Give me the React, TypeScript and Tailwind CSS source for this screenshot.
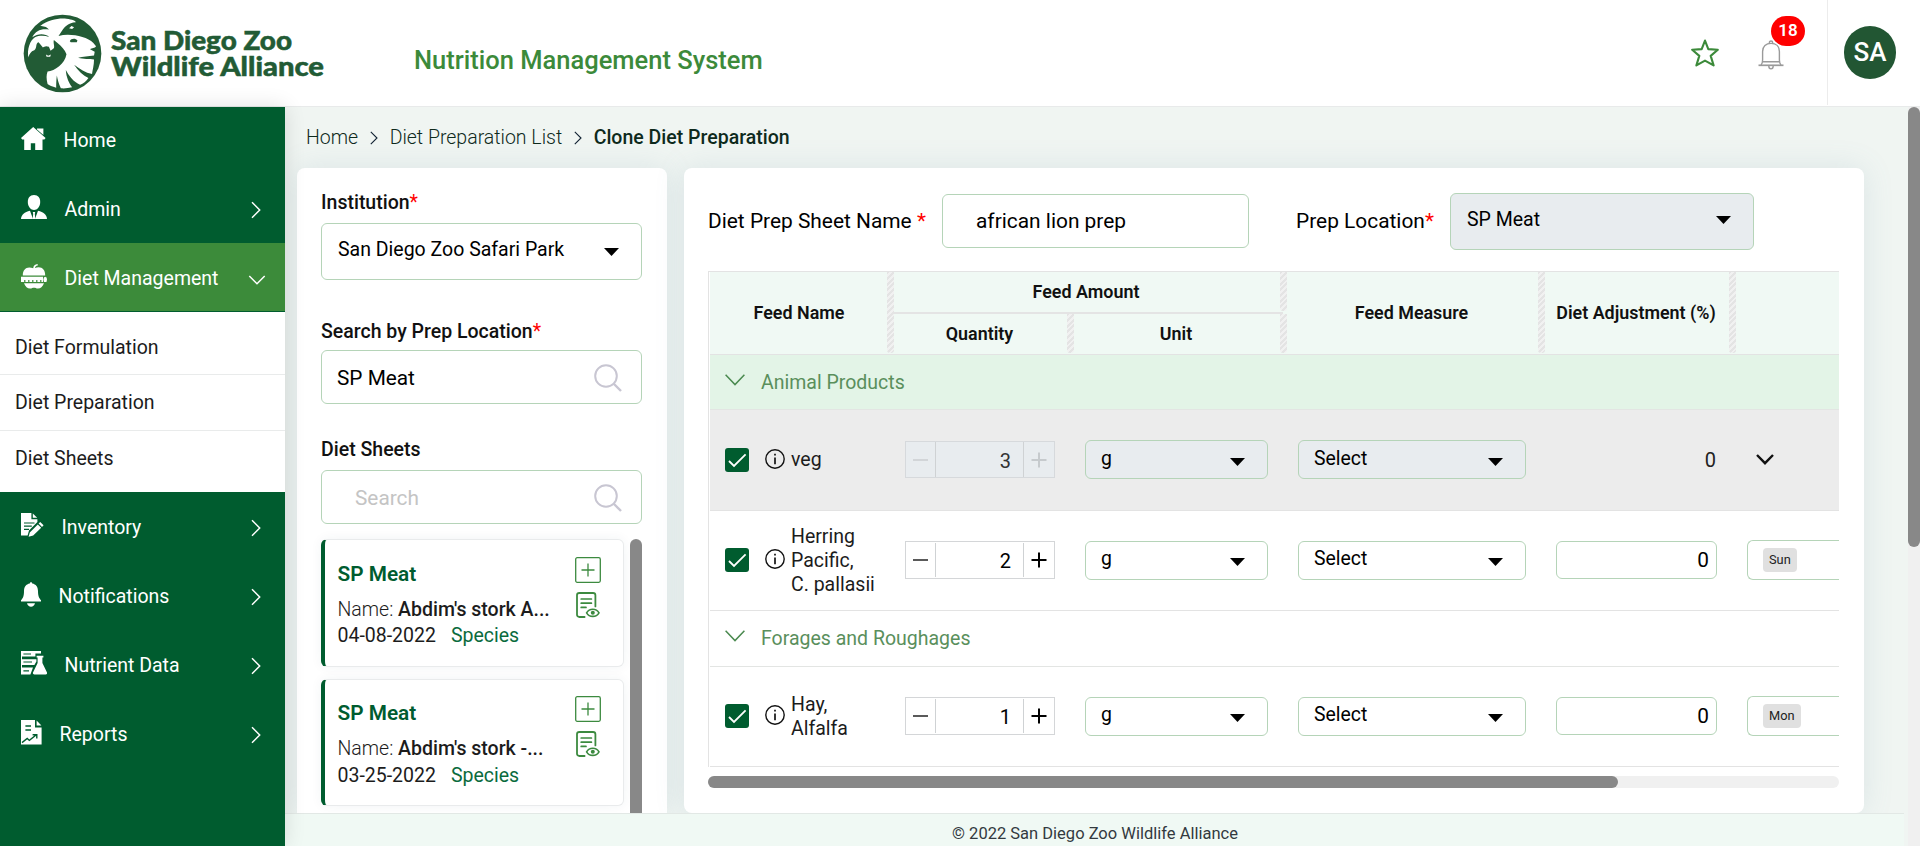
import React from "react";

/* ---------- icons ---------- */

function ZooEmblem() {
  return (
    <svg viewBox="25 25 236 238" className="h-[79px] w-[79px] shrink-0">
      <circle cx="143" cy="144" r="117" fill="#225b35" />
      <path
        fill="#fff"
        d="M76 61 C100 42 130 37 155 39 C172 41 184 46 183 50 C160 52 152 62 144 72 L131 91 C165 82 215 92 236 112 L244 122 C240 129 232 126 226 131 L240 139 L238 150 C220 153 205 153 190 157 C205 162 225 160 238 162 C238 180 233 195 232 206 C212 202 195 191 178 178 C190 197 205 210 221 218 C215 228 205 235 196 238 C176 230 163 212 153 194 C154 215 163 235 172 246 C160 249 148 250 138 249 C132 235 128 222 126 210 C124 225 124 238 124 247 C112 244 103 240 98 236 C94 220 94 208 98 198 C120 196 150 175 155 146 C150 132 140 122 128 112 L117 103 C114 114 122 124 115 130 L107 136 L102 124 C92 120 88 124 84 126 L71 110 C60 114 68 126 58 134 C48 136 42 148 40 156 C36 130 45 105 60 95 C75 88 90 90 103 94 C92 84 70 82 52 95 C62 75 80 68 102 72 C95 62 85 62 76 61Z"
      />
      <path fill="#225b35" d="M165 107 C168 99 182 97 188 105 L186 110 H168Z" />
      <path fill="#fff" d="M163 68 L170 61 L178 65 L172 70Z" />
      <path fill="#fff" d="M93 147 L100 151 L108 147 L106 154 H95Z" />
    </svg>
  );
}

function HomeIcon() {
  return (
    <svg viewBox="0 0 25 24" className="h-6 w-[25px]" fill="#fff">
      <path d="M12.2 0 L0 11 L1.2 12.6 H3.2 V23 H9.8 V16.2 H14.2 V23 H21.5 V12.6 H23.4 L24.6 11 Z" />
      <path d="M16 1.6 H22.4 V8 L16 2.6Z" />
    </svg>
  );
}

function AdminIcon() {
  return (
    <svg viewBox="0 0 26 24" className="h-6 w-[26px]" fill="#fff">
      <path d="M13 0 C17.2 0 19.2 3 19.2 7 C19.2 11.5 16.2 15 13 15 C9.8 15 6.8 11.5 6.8 7 C6.8 3 8.8 0 13 0Z" />
      <path d="M9 15.8 L12 24 H0 C.4 19.5 3.5 17.2 9 15.8Z" />
      <path d="M17 15.8 L14 24 H26 C25.6 19.5 22.5 17.2 17 15.8Z" />
      <path d="M11.8 17 H14.2 L13.8 19 L14.4 24 H11.6 L12.2 19Z" />
    </svg>
  );
}

function DietIcon() {
  return (
    <svg viewBox="0 0 26 25" className="h-[25px] w-[26px]" fill="#fff">
      <path d="M12.2 4.2 C12.4 1.8 14 .3 16.6 0 L16.8 1.4 C14.8 1.7 14 2.6 14 4 C20 1.8 24.3 5 24.2 11.5 H1.8 C1.7 5 6 1.8 12.2 4.2Z" />
      <path d="M0 12.8 H22 V18 H20.4 V16 H19.2 V18 H16.4 V16 H15.2 V18 H12.4 V16 H11.2 V18 H8.4 V16 H7.2 V18 H4.4 V16 H3.2 V18 H0Z" />
      <ellipse cx="24.2" cy="15.4" rx="1.8" ry="2.7" />
      <path d="M3 19.2 H23 C21.5 22.5 19.5 24.8 16.6 24.6 C15.2 24.5 14.5 23.8 13 23.8 C11.5 23.8 10.8 24.5 9.4 24.6 C6.5 24.8 4.5 22.5 3 19.2Z" />
    </svg>
  );
}

function InventoryIcon() {
  return (
    <svg viewBox="0 0 23 24" className="h-6 w-[23px]">
      <path fill="#fff" d="M0 0 H10.4 V6.2 H16.4 V9 L8 17.4 L6.6 22.6 H0Z" />
      <path fill="#fff" d="M11.8 .4 L16.2 4.8 H11.8Z" />
      <path stroke="#005c2f" strokeWidth="1.2" d="M3 10 H13.5 M3 13.2 H10.8 M3 16.4 H8" />
      <path fill="#fff" d="M19.2 9 L22.6 12.3 L21 14 L17.6 10.6Z M16.8 11.4 L20.2 14.8 L12.2 22.4 L7.6 23.8 L8.8 19.4Z" />
    </svg>
  );
}

function NotificationIcon() {
  return (
    <svg viewBox="0 0 20 25" className="h-[25px] w-5" fill="#fff">
      <path d="M8.8 1.4 C8.8 -.2 11.2 -.2 11.2 1.4 C15 2 17 5 17 9 C17 14 18 16 20 18.3 V19.4 H0 V18.3 C2 16 3 14 3 9 C3 5 5 2 8.8 1.4Z" />
      <path d="M6 21.3 H14 C13.4 23.5 12 24.8 10 24.8 C8 24.8 6.6 23.5 6 21.3Z" />
    </svg>
  );
}

function NutrientIcon() {
  return (
    <svg viewBox="0 0 26 24" className="h-6 w-[26px]">
      <path fill="#fff" fillRule="evenodd" d="M0 0 H20 V2.6 H14.4 V5.6 H0Z M2.4 2.6 V3.4 H10 V2.6Z" />
      <path fill="#fff" fillRule="evenodd" d="M0 8.2 H15.4 V10.4 L13.4 14 H0Z M2.4 10.6 V11.6 H11 V10.6Z" />
      <path fill="#fff" fillRule="evenodd" d="M0 16.4 H12 L9.4 23.4 H0Z M2.4 19.2 V20.4 H8 V19.2Z" />
      <path stroke="#fff" strokeWidth="1" d="M.5 0 V23" />
      <path fill="#fff" d="M15.6 4.8 H22.4 V6.4 H21.4 V12 L26 21.4 C26.4 22.6 25.8 23.6 24.6 23.6 H13.4 C12.2 23.6 11.6 22.6 12 21.4 L16.6 12 V6.4 H15.6Z" />
    </svg>
  );
}

function ReportsIcon() {
  return (
    <svg viewBox="0 0 21 25" className="h-[25px] w-[21px]">
      <path fill="#fff" d="M0 0 H14 V7.4 H20.6 V24.6 H0Z" />
      <path fill="#fff" d="M15.6 .6 L20.4 5.6 H15.6Z" />
      <path fill="none" stroke="#005c2f" strokeWidth="1.4" d="M4.4 6 H10 M4.4 10 H10 M1 22.6 L6.2 18.4 L8.4 20.4 L15.4 14.8 M11.6 14.8 H15.8 V18.6" />
    </svg>
  );
}

function Chevron({ down = false }: { down?: boolean }) {
  return down ? (
    <svg viewBox="0 0 18 10" className="mt-1 mr-[19px] ml-auto h-[10px] w-[18px]" fill="none" stroke="#fff" strokeWidth="1.5">
      <path d="M1.3 1 L9 8.7 L16.7 1" />
    </svg>
  ) : (
    <svg viewBox="0 0 10 18" className="mt-[3px] mr-6 ml-auto h-[18px] w-[10px]" fill="none" stroke="#fff" strokeWidth="1.5">
      <path d="M1 1.3 L8.7 9 L1 16.7" />
    </svg>
  );
}

function BreadcrumbArrow() {
  return (
    <svg viewBox="0 0 8 14" className="mr-3 ml-[11.5px] h-[14px] w-2" fill="none" stroke="#123" strokeWidth="1.1">
      <path d="M.8 .8 L7 7 L.8 13.2" />
    </svg>
  );
}

function Caret({ className = "" }: { className?: string }) {
  return (
    <svg viewBox="0 0 15 8" className={"h-2 w-[15px] shrink-0 " + className}>
      <path d="M0 0 H15 L7.5 8Z" fill="#000" />
    </svg>
  );
}

function SearchIcon() {
  return (
    <svg viewBox="0 0 28 28" className="mt-[2px] h-7 w-7" fill="none" stroke="#c8c6d2" strokeWidth="2">
      <circle cx="12" cy="12" r="10.8" />
      <path d="M19.5 19.5 L27 27" strokeWidth="2.4" />
    </svg>
  );
}

function PlusBox() {
  return (
    <svg viewBox="0 0 26 26" className="h-[26px] w-[26px]" fill="none" stroke="#3c8a3f" strokeWidth="1.3">
      <rect x=".7" y=".7" width="24.6" height="24.6" rx="1.5" />
      <path d="M13 6.5 V19.5 M6.5 13 H19.5" />
    </svg>
  );
}

function SheetView() {
  return (
    <svg viewBox="0 0 24 26" className="h-[26px] w-6" fill="none" stroke="#3c8a3f" strokeWidth="1.8" strokeLinecap="round">
      <path d="M8.6 25 H3.4 C2 25 1 24.2 1 22.8 V3.2 C1 1.8 2 1 3.4 1 H17 C18.4 1 19.4 1.8 19.4 3.2 V14.4" />
      <path d="M5.2 7 H15.4 M5.2 11.2 H15.4 M5.2 15.4 H10" strokeWidth="1.7" />
      <path d="M10.6 20.8 C13.4 16 20.2 16 23 20.8 C20.2 25.6 13.4 25.6 10.6 20.8Z" strokeWidth="1.6" />
      <circle cx="16.8" cy="20.8" r="2" fill="#3c8a3f" stroke="none" />
    </svg>
  );
}

function InfoIcon() {
  return (
    <svg viewBox="0 0 20 20" className="h-5 w-5 shrink-0" fill="none" stroke="#111" strokeWidth="1.4">
      <circle cx="10" cy="10" r="9.2" />
      <path d="M10 8.6 V15.2" strokeWidth="1.7" />
      <path d="M10 4.8 V6.6" strokeWidth="1.7" />
    </svg>
  );
}

function Checkbox() {
  return (
    <span className="flex h-6 w-6 shrink-0 items-center justify-center rounded-[3px] bg-[#005c2f]">
      <svg viewBox="0 0 24 24" className="h-6 w-6" fill="none" stroke="#fff" strokeWidth="1.8">
        <path d="M4 13 L9 18 L20.6 6.4" />
      </svg>
    </span>
  );
}

/* ---------- sidebar ---------- */

function NavItem({
  icon,
  label,
  className = "h-[69px]",
  arrow = "right",
}: {
  icon: React.ReactNode;
  label: string;
  className?: string;
  arrow?: "right" | "down" | "none";
}) {
  return (
    <a className={"flex shrink-0 items-center gap-[17.5px] pl-[21px] text-[19.5px] leading-6 text-white " + className}>
      <span className="mb-[3px]">{icon}</span>
      <span className="pt-[2px]">{label}</span>
      {arrow !== "none" && <Chevron down={arrow === "down"} />}
    </a>
  );
}

function Sidebar() {
  return (
    <nav className="z-10 flex w-[285px] shrink-0 flex-col bg-[#005c2f] shadow-[0_0_20px_rgba(0,0,0,0.12)]">
      <NavItem icon={<HomeIcon />} label="Home" className="h-[67px] pb-px" arrow="none" />
      <NavItem icon={<AdminIcon />} label="Admin" />
      <NavItem icon={<DietIcon />} label="Diet Management" arrow="down" className="h-[69px] border-b border-[#005c2f] bg-[#3c8b3a] pt-px" />
      <div className="flex h-[180px] shrink-0 flex-col bg-white text-[19.5px] leading-6 text-[#1c1c1c]">
        <a className="flex h-[63px] items-center border-b border-[#e9ebeb] pt-[9px] pl-[15px]">Diet Formulation</a>
        <a className="flex h-14 items-center border-b border-[#e9ebeb] pl-[15px]">Diet Preparation</a>
        <a className="flex h-14 items-center pl-[15px]">Diet Sheets</a>
      </div>
      <NavItem icon={<InventoryIcon />} label="Inventory" />
      <NavItem icon={<NotificationIcon />} label="Notifications" />
      <NavItem icon={<NutrientIcon />} label="Nutrient Data" />
      <NavItem icon={<ReportsIcon />} label="Reports" />
    </nav>
  );
}

/* ---------- header ---------- */

function Header() {
  return (
    <header className="flex h-[107px] shrink-0 border-b border-[#e8eaea] bg-white">
      <div className="flex w-[414px] pt-[14px] pl-[23px]">
        <ZooEmblem />
        <svg viewBox="0 0 220 79" className="ml-[7px] h-[79px] w-[220px]" fill="#225b35" fontFamily="Lato, sans-serif" fontWeight="900">
          <text x="2" y="35.5" fontSize="26.5" textLength="181" lengthAdjust="spacingAndGlyphs" stroke="#225b35" strokeWidth=".5">San Diego Zoo</text>
          <text x="2" y="61.5" fontSize="26.5" textLength="213" lengthAdjust="spacingAndGlyphs" stroke="#225b35" strokeWidth=".5">Wildlife Alliance</text>
        </svg>
      </div>
      <h1 className="pt-[44px] text-[25.5px] leading-8 font-medium text-[#3c8a3a]">Nutrition Management System</h1>
      <div className="mr-[43px] ml-auto flex">
        <svg viewBox="0 0 28 28" className="mt-[39px] h-7 w-7" fill="none" stroke="#3c8a3a" strokeWidth="2.1" strokeLinejoin="round">
          <path d="M14 1.6 L17.3 10.1 L26.8 10.8 L19.7 16.9 L22.6 26.4 L14 21.6 L5.4 26.4 L8.3 16.9 L1.2 10.8 L10.7 10.1Z" />
        </svg>
        <div className="relative mt-10 ml-[39px] h-[30px] w-[26px]">
          <svg viewBox="0 0 26 30" className="h-[30px] w-[26px]" fill="none" stroke="#9a9a9a" strokeWidth="1.4">
            <path d="M.5 25.3 H25.5" strokeWidth="1.7" />
            <path d="M3 25 C4.2 23.6 4.6 22 4.6 20 V11.5 C4.6 6.4 8 3.4 13 3.4 C18 3.4 21.4 6.4 21.4 11.5 V20 C21.4 22 21.8 23.6 23 25 M4.6 21.8 H21.4" />
            <path d="M11.4 3.4 V2.2 C11.4 .6 14.6 .6 14.6 2.2 V3.4 M10.8 26 C10.8 29.8 15.2 29.8 15.2 26" />
          </svg>
          <span className="absolute -top-6 left-[13px] flex h-[30px] w-[34px] items-center justify-center rounded-[15px] bg-[#ff0000] text-[17px] font-semibold text-white">18</span>
        </div>
      </div>
      <div className="mb-px flex w-[93px] border-l border-[#ececec] pt-[26px] pl-4">
        <span className="flex h-[53px] w-[52px] items-center justify-center rounded-full bg-[#225633] text-[26px] font-medium text-white">SA</span>
      </div>
    </header>
  );
}

/* ---------- left panel ---------- */

function SheetCard({ name, date, small = false }: { name: string; date: string; small?: boolean }) {
  return (
    <article
      className={
        "flex w-[303px] shrink-0 rounded-[6px] border border-l-4 border-[#e9ebec] border-l-[#005c2f] bg-white pl-[12.5px] shadow-[0_0_12px_rgba(30,60,80,0.06)] " +
        (small ? "h-[127px]" : "h-[128px]")
      }
    >
      <div className={"w-[237px] text-[19.5px] leading-[26px] text-[#1c1c1c] " + (small ? "pt-5" : "pt-[21px]")}>
        <h3 className="mb-[10px] text-[20.8px] font-semibold text-[#005c2f]">SP Meat</h3>
        <p className="whitespace-nowrap"><span className="font-light">Name: </span><span className="text-[19.5px] font-medium">{name}</span></p>
        <p className={small ? "pt-px" : ""}>{date}<span className="ml-[15px] text-[#0a6b3d]">Species</span></p>
      </div>
      <div className={"flex flex-col items-center gap-[9px] " + (small ? "pt-4" : "pt-[17px]")}>
        <PlusBox />
        <SheetView />
      </div>
    </article>
  );
}

function LeftPanel() {
  const box = "flex rounded-[6px] border border-[#b5d4b8] bg-white text-black";
  return (
    <aside className="flex w-[370px] shrink-0 flex-col overflow-hidden pr-[25px] pl-6 text-[19.5px]">
      <label className="mt-[21px] leading-7 font-medium text-[#111]">Institution<span className="font-normal text-[#ff0000]">*</span></label>
      <div className={box + " mt-[6px] h-[57px] shrink-0 items-center justify-between pr-[22px] pl-4"}>
        <span className="mb-[3px]">San Diego Zoo Safari Park</span>
        <Caret />
      </div>
      <label className="mt-[38px] leading-7 font-medium text-[#111]">Search by Prep Location<span className="font-normal text-[#ff0000]">*</span></label>
      <div className={box + " mt-1 h-[54px] shrink-0 items-center justify-between pr-[19px] pl-[15px] text-[20.8px]"}>
        <span className="pt-[4px]">SP Meat</span>
        <SearchIcon />
      </div>
      <label className="mt-8 leading-7 font-medium text-[#111]">Diet Sheets</label>
      <div className={box + " mt-[6px] h-[54px] shrink-0 items-center justify-between pr-[19px] pl-[33px] text-[20.8px]"}>
        <span className="pt-[4px] text-[#c4c4c4]">Search</span>
        <SearchIcon />
      </div>
      <div className="mt-[15px] flex h-[274px] shrink-0 justify-between">
        <div className="flex flex-col gap-3">
          <SheetCard name="Abdim's stork A..." date="04-08-2022" />
          <SheetCard name="Abdim's stork -..." date="03-25-2022" small />
        </div>
        <div className="w-3 rounded-t-[6px] bg-[#888]" />
      </div>
    </aside>
  );
}

/* ---------- feed table ---------- */

const GRID = "grid grid-cols-[184px_180px_213px_258px_191px_1fr]";
const STRIPES = "w-[7px] shrink-0 rounded-b-[3px] bg-[repeating-linear-gradient(135deg,#e4e4e4_0px,#e4e4e4_2px,#f1f1f1_2px,#f1f1f1_4px)]";

function HeadCell({ label, className = "" }: { label: string; className?: string }) {
  return (
    <div className={"flex h-full pb-px " + className}>
      <span className="flex flex-1 items-center justify-center pt-[2px] pr-[2px] whitespace-nowrap">{label}</span>
      <span className={STRIPES} />
    </div>
  );
}

function TableHead() {
  return (
    <div className="grid h-[83px] shrink-0 grid-cols-[184px_393px_258px_191px_1fr] border-b border-[#e3e3e3] bg-[#f0f9f4] text-[17.9px] font-semibold text-[#111]">
      <HeadCell label="Feed Name" className="pl-[3px]" />
      <div className="flex flex-col">
        <div className="h-10"><HeadCell label="Feed Amount" /></div>
        <div className="mr-1 h-[2px] bg-[#e4e4e4]" />
        <div className="flex h-10">
          <HeadCell label="Quantity" className="w-[180px]" />
          <HeadCell label="Unit" className="flex-1" />
        </div>
      </div>
      <HeadCell label="Feed Measure" />
      <HeadCell label="Diet Adjustment (%)" />
    </div>
  );
}

function GroupRow({ label, className }: { label: string; className: string }) {
  return (
    <div className={"flex shrink-0 items-center border-b border-[#e3e5e3] pl-[15px] text-[19.5px] text-[#5a8f5c] " + className}>
      <svg viewBox="0 0 20 12" className="mr-4 mb-1 h-3 w-5" fill="none" stroke="#4b8a50" strokeWidth="1.5">
        <path d="M.6 .8 L10 10.6 L19.4 .8" />
      </svg>
      <span className="pt-[2px]">{label}</span>
    </div>
  );
}

function Stepper({ value, disabled }: { value: number; disabled?: boolean }) {
  return (
    <div
      className={
        "flex w-[150px] items-center border text-[20px] " +
        (disabled ? "h-[37px] border-[#d6d9dc] bg-[#e8ecef] text-[#333]" : "h-[38px] border-[#d4d6d8] bg-white text-black")
      }
    >
      <svg viewBox="0 0 29 36" className="h-9 w-[29px]" fill="none" stroke={disabled ? "#c6cacd" : "#000"} strokeWidth="1.3">
        <path d="M7 18 H22" />
      </svg>
      <span className={"flex flex-1 items-center justify-end border-x border-[#cfd2d4] pt-[2px] pr-3 " + (disabled ? "h-full" : "h-[34px]")}>{value}</span>
      <svg viewBox="0 0 30 36" className="h-9 w-[30px]" fill="none" stroke={disabled ? "#c6cacd" : "#000"} strokeWidth="2">
        <path d="M7.5 18 H22.5 M15 10.5 V25.5" />
      </svg>
    </div>
  );
}

function SelectBox({ value, width, disabled }: { value: string; width: string; disabled?: boolean }) {
  return (
    <div
      className={
        "flex h-[39px] items-center justify-between rounded-[6px] border border-[#b5d4b8] pr-[22px] pl-[15px] text-[19.4px] text-black " +
        width + (disabled ? " bg-[#e8ecef]" : " bg-white")
      }
    >
      <span className="mb-[2px]">{value}</span>
      <Caret className="mt-1" />
    </div>
  );
}

type Feed = { name: string[]; quantity: number; unit: string; measure: string; adjustment: number; day?: string; disabled?: boolean };

function FeedRow({ feed, className }: { feed: Feed; className: string }) {
  return (
    <div className={GRID + " shrink-0 items-center border-b border-[#e3e3e3] pb-px " + className}>
      <div className="flex items-center pl-[15px]">
        <Checkbox />
        <span className="mb-[2px] ml-4"><InfoIcon /></span>
        <span className="ml-[6px] pt-px text-[19.5px] leading-6 text-[#1c1c1c]">
          {feed.name.map((line) => (
            <span key={line} className="block whitespace-nowrap">{line}</span>
          ))}
        </span>
      </div>
      <div className="pl-[11px]"><Stepper value={feed.quantity} disabled={feed.disabled} /></div>
      <div className="pl-[11px]"><SelectBox value={feed.unit} width="w-[183px]" disabled={feed.disabled} /></div>
      <div className="pl-[11px]"><SelectBox value={feed.measure} width="w-[228px]" disabled={feed.disabled} /></div>
      <div className="pl-[11px]">
        {feed.disabled ? (
          <div className="w-[160px] text-right text-[20px] text-[#222]">{feed.adjustment}</div>
        ) : (
          <div className="flex h-[38px] w-[161px] items-center justify-end rounded-[6px] border border-[#b5d4b8] bg-white pt-[2px] pr-[7px] text-[20.8px] text-black">{feed.adjustment}</div>
        )}
      </div>
      {feed.day ? (
        <div className="pl-[11px]">
          <div className="-mt-px flex h-10 items-center rounded-l-[6px] border border-r-0 border-[#b5d4b8] bg-white pl-[15px]">
            <span className="rounded-[4px] bg-[#e0e0e0] px-[6px] text-[12.8px] leading-6 text-[#222]">{feed.day}</span>
          </div>
        </div>
      ) : (
        <svg viewBox="0 0 18 11" className="ml-5 h-[11px] w-[18px]" fill="none" stroke="#111" strokeWidth="2.4">
          <path d="M1 1 L9 9.2 L17 1" />
        </svg>
      )}
    </div>
  );
}

const VEG: Feed = { name: ["veg"], quantity: 3, unit: "g", measure: "Select", adjustment: 0, disabled: true };
const HERRING: Feed = { name: ["Herring", "Pacific,", "C. pallasii"], quantity: 2, unit: "g", measure: "Select", adjustment: 0, day: "Sun" };
const HAY: Feed = { name: ["Hay,", "Alfalfa"], quantity: 1, unit: "g", measure: "Select", adjustment: 0, day: "Mon" };

function PrepPanel() {
  return (
    <section className="flex w-[1180px] shrink-0 flex-col pr-[25px] pl-6">
      <div className="mt-[25px] flex h-[57px] shrink-0 items-center text-[20.9px] text-black">
        <span className="w-[234px] whitespace-nowrap">Diet Prep Sheet Name <span className="text-[#ff0000]">*</span></span>
        <div className="mb-[2px] flex h-[54px] w-[307px] items-center rounded-[6px] border border-[#b5d4b8] pt-[3px] pl-[33px]">african lion prep</div>
        <span className="ml-[47px] w-[154px] whitespace-nowrap">Prep Location<span className="text-[#ff0000]">*</span></span>
        <div className="flex h-[57px] w-[304px] items-center justify-between rounded-[6px] border border-[#b5d4b8] bg-[#e8ecef] pr-[22px] pl-4 text-[19.5px]">
          <span className="mb-[3px]">SP Meat</span>
          <Caret className="mb-[3px]" />
        </div>
      </div>
      <div className="mt-[21px] flex shrink-0 flex-col border-t border-l border-[#e3e3e3] pl-px">
        <TableHead />
        <GroupRow label="Animal Products" className="h-[55px] bg-[#e3f4e7]" />
        <FeedRow feed={VEG} className="h-[101px] bg-[#ececec]" />
        <FeedRow feed={HERRING} className="h-[100px]" />
        <GroupRow label="Forages and Roughages" className="h-14 pb-[2px]" />
        <FeedRow feed={HAY} className="h-[100px]" />
      </div>
      <div className="mt-[9px] h-3 shrink-0 rounded-[6px] bg-[#f0f0f0]">
        <div className="h-3 w-[910px] rounded-[6px] bg-[#888]" />
      </div>
    </section>
  );
}

/* ---------- page ---------- */

export default function App() {
  return (
    <div className="flex h-[846px] w-[1920px] flex-col overflow-hidden bg-white font-[Roboto,sans-serif]">
      <Header />
      <div className="flex flex-1">
        <Sidebar />
        <div className="flex w-[1623px] shrink-0 flex-col bg-[#f0f5f2]">
          <main className="flex h-[706px] flex-col overflow-hidden">
            <div className="flex h-[61px] shrink-0 items-center pt-px pl-[21px] text-[19.5px] font-light text-[#0e2a1c]">
              <span>Home</span>
              <BreadcrumbArrow />
              <span>Diet Preparation List</span>
              <BreadcrumbArrow />
              <span className="font-medium">Clone Diet Preparation</span>
            </div>
            <div className="flex h-[645px] shrink-0 gap-[17px] pl-3">
              <div className="flex rounded-t-[8px] bg-white shadow-[0_0_30px_rgba(100,140,170,0.15)]">
                <LeftPanel />
              </div>
              <div className="flex rounded-[8px] bg-white shadow-[0_0_30px_rgba(100,140,170,0.15)]">
                <PrepPanel />
              </div>
            </div>
          </main>
          <footer className="mr-1 flex h-[33px] items-center justify-center border-t border-[#e2e8e5] bg-[#f0f9f4] pt-[9px] pl-px text-[16.5px] text-[#333a3f]">
            © 2022 San Diego Zoo Wildlife Alliance
          </footer>
        </div>
        <div className="w-3 bg-[#f0f0f0]">
          <div className="h-[440px] rounded-[6px] bg-[#888]" />
        </div>
      </div>
    </div>
  );
}
